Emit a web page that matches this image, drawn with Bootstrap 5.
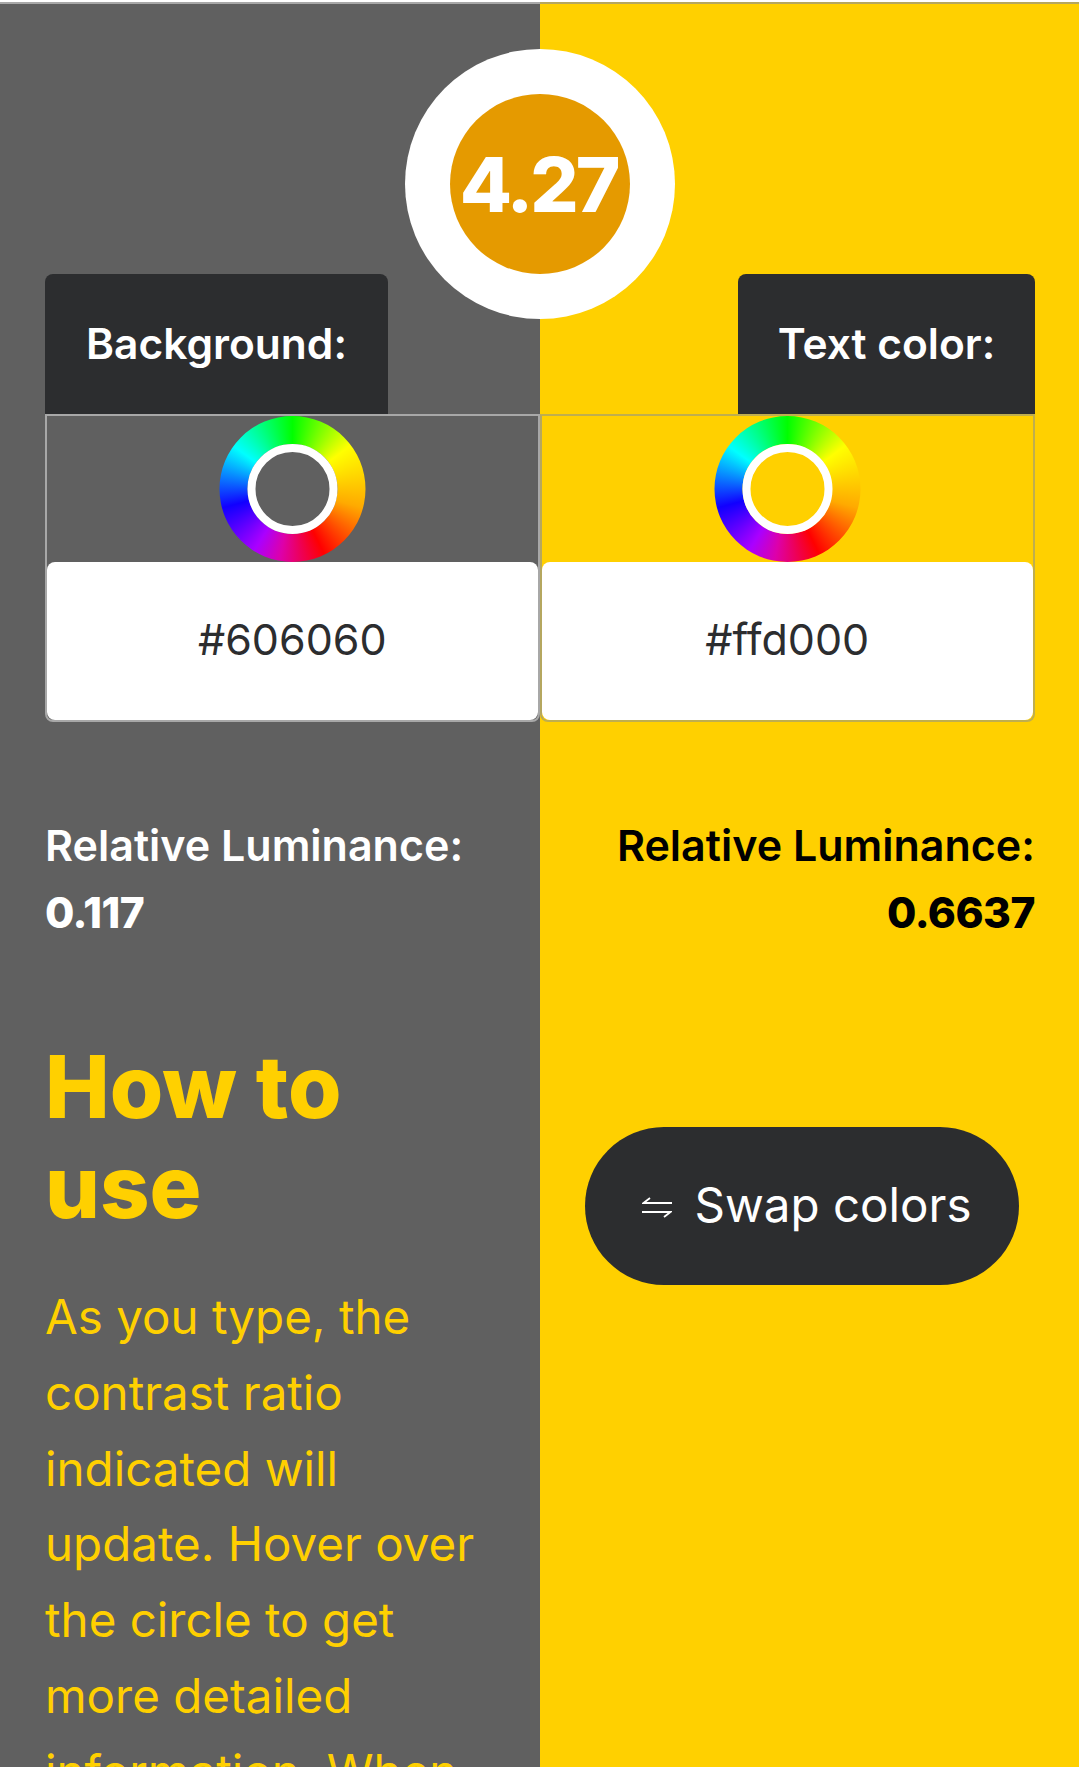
<!DOCTYPE html>
<html lang="en">
<head>
    <meta charset="UTF-8">
    <title>Contrast checker</title>
    <link href="https://cdn.jsdelivr.net/npm/bootstrap@5.3.0/dist/css/bootstrap.min.css" rel="stylesheet">
    <style>
        html, body { height: 100%; overflow: hidden; }
        body { font-family: "Inter", "Liberation Sans", sans-serif; background: #fff; padding-top: 2px; }
        .rule-left, .rule-right { width: 50%; height: 2px; }
        .rule-left { background: #a8a8a8; }
        .rule-right { background: #b5a75f; }
        .half-left, .half-right { width: 50%; min-height: 1764px; flex: none; }
        .half-left { background: #606060; color: #ffd000; padding-left: 45px; }
        .half-right { background: #ffd000; color: #000; padding-right: 44px; }

        .ratio-ring { position: absolute; left: 405px; top: 45px; width: 270px; height: 270px; border-radius: 50%; background: #fff; display: flex; align-items: center; justify-content: center; z-index: 2; }
        .ratio-value { width: 180px; height: 180px; border-radius: 50%; background: #e59a00; color: #fff; font-size: 76px; font-weight: 800; letter-spacing: -3px; padding-right: 3px; display: flex; align-items: center; justify-content: center; }

        .tab-row { height: 140px; margin-top: 270px; }
        .color-tab { background: #2c2d2f; color: #fff; font-size: 42.5px; font-weight: 600; height: 140px; border-radius: 8px 8px 0 0; display: flex; align-items: center; justify-content: center; }
        .tab-bg { width: 343px; }
        .tab-text { width: 297px; }

        .well-box { height: 308px; display: flex; flex-direction: column; border-style: solid; border-width: 2px; }
        .well-left { border-color: #a8a8a8; border-radius: 0 0 8px 8px; }
        .well-right { border-color: #bfae4e; border-left-color: #b5a75f; border-radius: 0 0 8px 8px; }
        .wheel-slot { height: 146px; display: flex; justify-content: center; flex: none; }
        .wheel-fill { width: 147px; height: 146px; background: conic-gradient(#0f0, #ff0 53deg, #fa0 105deg, #f00 154deg, #d0a 190deg, #a0f 212deg, #10f 255deg, #0ff 306deg, #0f8 332deg, #0f0); }
        .hex-field { flex: 1; background: #fff; border-radius: 8px; display: flex; align-items: center; justify-content: center; color: #2c2d2f; font-size: 43px; padding-bottom: 3px; }

        .lum-block { font-size: 43px; font-weight: 600; line-height: 67px; margin-top: 90px; }
        .lum-left { color: #fff; }
        .lum-value { font-size: 42.5px; font-weight: 800; letter-spacing: -.5px; }

        .how-title { font-size: 86.5px; font-weight: 800; line-height: 100px; margin: 0; margin-top: 91px; width: 400px; color: #ffd000; }
        .how-text { font-size: 47.5px; line-height: 75.8px; margin-top: 42px; width: 440px; color: #ffd000; }

        .swap-btn { background: #2c2d2f; color: #fff; border: 0; border-radius: 80px; width: 434px; height: 158px; font-size: 47.5px; margin-top: 181px; margin-left: 45px; padding: 0 12px 3px 23px; }
        .swap-btn:hover { background: #2c2d2f; color: #fff; }
        .swap-btn svg { width: 30px; height: 21px; margin-right: 22px; margin-top: 6px; }
    </style>
</head>
<body>
    <div class="d-flex"><div class="rule-left"></div><div class="rule-right"></div></div>
    <div class="d-flex position-relative">
        <div class="ratio-ring"><div class="ratio-value">4.27</div></div>

        <div class="half-left">
            <div class="tab-row"><div class="color-tab tab-bg">Background:</div></div>
            <div class="well-box well-left">
                <div class="wheel-slot">
                    <svg width="147" height="146" viewBox="0 0 147 146"><defs><clipPath id="c1"><path clip-rule="evenodd" d="M73.5 0a73 73 0 1 0 0 146a73 73 0 1 0 0-146zM73.5 28a45 45 0 1 1 0 90a45 45 0 1 1 0-90z"/></clipPath></defs><foreignObject width="147" height="146" clip-path="url(#c1)"><div xmlns="http://www.w3.org/1999/xhtml" class="wheel-fill"></div></foreignObject><circle cx="73.5" cy="73" r="41" fill="none" stroke="#fff" stroke-width="8"/></svg>
                </div>
                <div class="hex-field">#606060</div>
            </div>
            <div class="lum-block lum-left">Relative Luminance:<br><span class="lum-value">0.117</span></div>
            <h2 class="how-title">How to use</h2>
            <p class="how-text">As you type, the contrast ratio indicated will update. Hover over the circle to get more detailed information. When</p>
        </div>

        <div class="half-right">
            <div class="tab-row d-flex justify-content-end"><div class="color-tab tab-text">Text color:</div></div>
            <div class="well-box well-right">
                <div class="wheel-slot">
                    <svg width="147" height="146" viewBox="0 0 147 146"><defs><clipPath id="c2"><path clip-rule="evenodd" d="M73.5 0a73 73 0 1 0 0 146a73 73 0 1 0 0-146zM73.5 28a45 45 0 1 1 0 90a45 45 0 1 1 0-90z"/></clipPath></defs><foreignObject width="147" height="146" clip-path="url(#c2)"><div xmlns="http://www.w3.org/1999/xhtml" class="wheel-fill"></div></foreignObject><circle cx="73.5" cy="73" r="41" fill="none" stroke="#fff" stroke-width="8"/></svg>
                </div>
                <div class="hex-field">#ffd000</div>
            </div>
            <div class="lum-block text-end">Relative Luminance:<br><span class="lum-value">0.6637</span></div>
            <button type="button" class="btn swap-btn d-flex align-items-center justify-content-center">
                <svg viewBox="0 0 30 21" fill="none" stroke="#fff" stroke-width="1.8"><path d="M30 6H1.5L8 1"/><path d="M0 15H28.5L22 20"/></svg>Swap colors
            </button>
        </div>
    </div>
    <script src="https://cdn.jsdelivr.net/npm/bootstrap@5.3.0/dist/js/bootstrap.bundle.min.js"></script>
</body>
</html>
